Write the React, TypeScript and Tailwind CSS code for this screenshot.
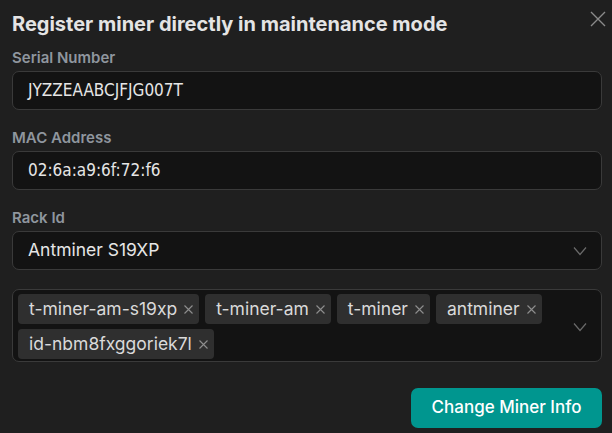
import React from "react";

const tags = ["t-miner-am-s19xp", "t-miner-am", "t-miner", "antminer", "id-nbm8fxggoriek7l"];

const Chevron = () => (
	<svg width="14" height="10" viewBox="0 0 14 10" fill="none" className="shrink-0">
		<polyline points="1,1.5 7,8.5 13,1.5" stroke="#6a6a6a" strokeWidth="1.2" />
	</svg>
);

const SmallX = () => (
	<svg width="9" height="9" viewBox="0 0 9 9" fill="none" className="shrink-0">
		<path d="M0.5 0.5L8.5 8.5M8.5 0.5L0.5 8.5" stroke="#8e8e8e" strokeWidth="1.1" />
	</svg>
);

const Label: React.FC<{ children: React.ReactNode }> = ({ children }) => (
	<label className="block text-[15px] leading-5 font-semibold text-[#8f969e] mb-[3px]">
		{children}
	</label>
);

const TextField: React.FC<{ value: string }> = ({ value }) => (
	<div className="h-[39px] flex items-center px-[15px] rounded-[7px] border border-[#3a3a3a] bg-[#131313] text-[17px] text-[#e6e6e6] font-['Liberation_Sans_Narrow','DejaVu_Sans_Condensed',sans-serif] font-stretch-condensed">
		{value}
	</div>
);

export default function App() {
	return (
		<div className="relative w-[612px] h-[433px] bg-[#1f1f1f] font-['Inter',sans-serif] pl-[12px] pr-[10px] pt-[10px] overflow-hidden">
			{/* Close */}
			<button className="absolute top-[11px] left-[590px]">
				<svg width="16" height="16" viewBox="0 0 16 16" fill="none">
					<path d="M1 1L15 15M15 1L1 15" stroke="#8a8a8a" strokeWidth="1.4" />
				</svg>
			</button>

			<h2 className="text-[20px] leading-7 font-bold text-[#e4e4e4] mb-[10px]">
				Register miner directly in maintenance mode
			</h2>

			<Label>Serial Number</Label>
			<TextField value="JYZZEAABCJFJG007T" />

			<div className="mt-[18px]">
				<Label>MAC Address</Label>
				<TextField value="02:6a:a9:6f:72:f6" />
			</div>

			<div className="mt-[18px]">
				<Label>Rack Id</Label>
				<div className="h-[39px] flex items-center justify-between pl-[15px] pr-[14px] rounded-[7px] border border-[#3a3a3a] bg-[#131313]">
					<span className="text-[17.5px] text-[#e6e6e6]">Antminer S19XP</span>
					<Chevron />
				</div>
			</div>

			{/* Tags */}
			<div className="mt-[19px] flex items-center rounded-[7px] border border-[#3a3a3a] bg-[#131313] pt-[4px] pb-[2px] pl-[5px] pr-[14px]">
				<div className="flex-1 flex flex-wrap gap-x-[6px] gap-y-[5px]">
					{tags.map((t) => (
						<span
							key={t}
							className="h-[30px] flex items-center gap-[7px] pl-[11px] pr-[6px] rounded-[4px] bg-[#2f2f2f] text-[17.5px] text-[#dadada]">
							{t}
							<SmallX />
						</span>
					))}
				</div>
				<Chevron />
			</div>

			<div className="flex justify-end mt-[26px]">
				<button className="h-[40px] w-[191px] rounded-[7px] bg-[#00968f] text-white text-[17px] font-medium">
					Change Miner Info
				</button>
			</div>
		</div>
	);
}
